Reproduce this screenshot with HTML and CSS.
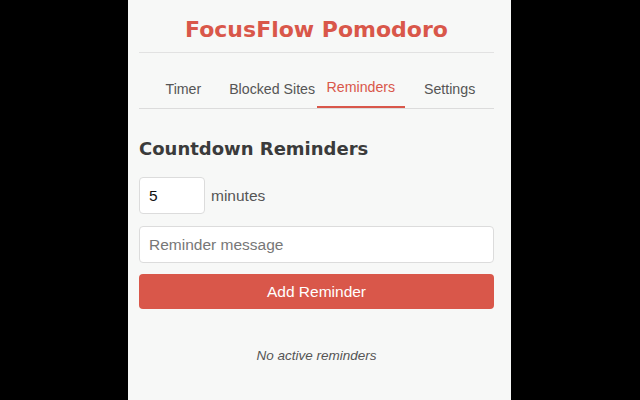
FILE: index.html
```html
<!DOCTYPE html>
<html lang="en">
  <head>
    <meta charset="UTF-8" />
    <meta name="viewport" content="width=device-width, initial-scale=1.0" />
    <title>FocusFlow Pomodoro</title>
    <link rel="stylesheet" href="styles.css">
  </head>
  <body>
    <div id="popup">
      <h1 class="title">FocusFlow Pomodoro</h1>
      <div class="tabs">
        <button class="tab">Timer</button>
        <button class="tab">Blocked Sites</button>
        <button class="tab active">Reminders</button>
        <button class="tab">Settings</button>
      </div>

      <div class="panel">
        <h2>Countdown Reminders</h2>
        <div class="row">
          <input type="number" id="minutes" value="5" />
          <span class="unit">minutes</span>
        </div>
        <input type="text" id="message" placeholder="Reminder message" />
        <button id="add">Add Reminder</button>
        <p class="empty">No active reminders</p>
      </div>
    </div>
  </body>
</html>
```

FILE: styles.css
```css
* {
  margin: 0;
  padding: 0;
  box-sizing: border-box;
}
body {
  background-color: #000;
  height: 400px;
  display: flex;
  justify-content: center;
  font-family: "Liberation Sans", Arial, sans-serif;
}
#popup {
  width: 383px;
  height: 400px;
  margin-left: -1px;
  background-color: #f7f8f7;
  padding: 0 17px 0 11px;
}
.title {
  font-family: "DejaVu Sans", Verdana, sans-serif;
  font-size: 22px;
  line-height: 32px;
  color: #d9574a;
  text-align: center;
  padding-top: 14px;
  padding-bottom: 6px;
  border-bottom: 1px solid #e2e2e2;
}
.tabs {
  display: flex;
  margin-top: 16px;
  border-bottom: 1px solid #dcdcdc;
}
.tab {
  flex: 1;
  background: none;
  border: none;
  border-bottom: 2px solid transparent;
  font-family: "Liberation Sans", Arial, sans-serif;
  font-size: 14.2px;
  line-height: 18px;
  color: #555;
  padding: 11px 0 8px;
  white-space: nowrap;
}
.tab.active {
  color: #d9574a;
  border-bottom-color: #d9574a;
  padding-top: 9px;
  padding-bottom: 10px;
}
.panel {
  display: flex;
  flex-direction: column;
}
h2 {
  font-family: "DejaVu Sans", Verdana, sans-serif;
  font-size: 18px;
  line-height: 24px;
  color: #3b3b3b;
  margin-top: 28px;
}
.row {
  display: flex;
  align-items: center;
  gap: 6px;
  margin-top: 16px;
}
input {
  font-family: "Liberation Sans", Arial, sans-serif;
  font-size: 15.5px;
  height: 37px;
  border: 1px solid #dcdcdc;
  border-radius: 4px;
  background-color: #fff;
  padding: 0 9px;
  color: #111;
  outline: none;
}
#minutes {
  width: 66px;
  -moz-appearance: textfield;
}
#minutes::-webkit-inner-spin-button {
  -webkit-appearance: none;
}
.unit {
  font-size: 15.5px;
  color: #555;
}
#message {
  width: 100%;
  margin-top: 12px;
}
#message::placeholder {
  color: #777;
}
#add {
  margin-top: 11px;
  height: 35px;
  border: none;
  border-radius: 4px;
  background-color: #d9574a;
  color: #fff;
  font-family: "Liberation Sans", Arial, sans-serif;
  font-size: 15.5px;
}
.empty {
  margin-top: 37px;
  text-align: center;
  font-style: italic;
  font-size: 13.5px;
  line-height: 20px;
  color: #555;
}
```
